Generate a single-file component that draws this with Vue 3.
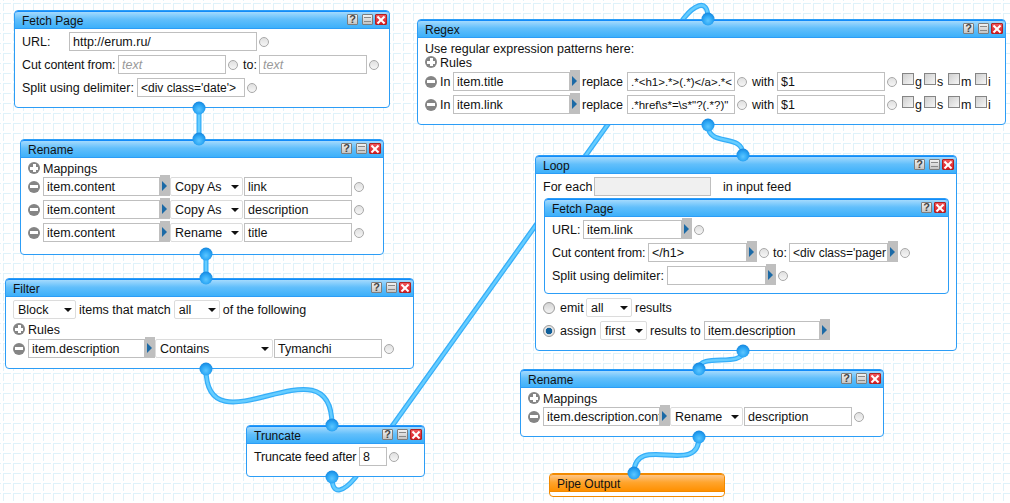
<script setup>
const wires = [
  'M199 108 L199 139',
  'M206 254 L206 278',
  'M206 369 C206 455 332 335 332 425',
  'M332 477 C332 498 345 490 355 478 L684 18 C692 8 708 -5 708 19',
  'M708 125 C708 148 743 132 743 155',
  'M743 351 C743 368 699 352 699 369',
  'M699 437 C699 478 634 432 634 473'
]
const balls = [
  [199, 108], [199, 139], [206, 254], [206, 278], [206, 369], [332, 425], [332, 477],
  [708, 19], [708, 125], [743, 155], [743, 351], [699, 369], [699, 437], [634, 473]
]
</script>

<template>
  <div class="canvas">
    <svg class="layer" width="1010" height="503">
      <defs>
        <pattern id="grid" x="3" y="3" width="10" height="10" patternUnits="userSpaceOnUse">
          <path class="grid-line" d="M0 .5H8M.5 0V8" />
        </pattern>
      </defs>
      <rect width="1010" height="503" fill="url(#grid)" />
      <g v-for="d in wires" :key="d">
        <path class="wire-out" :d="d" />
        <path class="wire-in" :d="d" />
      </g>
    </svg>

    <section class="mod m-fetch">
      <header class="title">Fetch Page<span class="btns"><i class="btn help">?</i><i class="btn min"></i><i class="btn close"></i></span></header>
      <div class="body">
        <div class="row"><span class="w47">URL:</span><span class="inp w188">http://erum.ru/</span><i class="term"></i></div>
        <div class="row"><span class="w96 tight">Cut content from:</span><span class="inp w108 ph">text</span><i class="term"></i><span class="to">to:</span><span class="inp w108 ph">text</span><i class="term"></i></div>
        <div class="row"><span class="w115">Split using delimiter:</span><span class="inp w108 sm">&lt;div class='date'&gt;</span><i class="term"></i></div>
      </div>
    </section>

    <section class="mod m-rename">
      <header class="title">Rename<span class="btns"><i class="btn help">?</i><i class="btn min"></i><i class="btn close"></i></span></header>
      <div class="body">
        <div class="row rule-head"><i class="ico plus"></i>Mappings</div>
        <div class="row"><i class="ico minus"></i><span class="inp w117">item.content</span><i class="arrow"></i><span class="sel w73">Copy As</span><span class="inp w108 ml1">link</span><i class="term"></i></div>
        <div class="row"><i class="ico minus"></i><span class="inp w117">item.content</span><i class="arrow"></i><span class="sel w73">Copy As</span><span class="inp w108 ml1">description</span><i class="term"></i></div>
        <div class="row"><i class="ico minus"></i><span class="inp w117">item.content</span><i class="arrow"></i><span class="sel w73">Rename</span><span class="inp w108 ml1">title</span><i class="term"></i></div>
      </div>
    </section>

    <section class="mod m-filter">
      <header class="title">Filter<span class="btns"><i class="btn help">?</i><i class="btn min"></i><i class="btn close"></i></span></header>
      <div class="body">
        <div class="row"><span class="sel w63">Block</span><span class="mx3">items that match</span><span class="sel w46">all</span><span class="mx3">of the following</span></div>
        <div class="row rule-head rules-filter"><i class="ico plus"></i>Rules</div>
        <div class="row"><i class="ico minus"></i><span class="inp w117">item.description</span><i class="arrow"></i><span class="sel w118">Contains</span><span class="inp w108 ml1">Tymanchi</span><i class="term"></i></div>
      </div>
    </section>

    <section class="mod m-trunc">
      <header class="title">Truncate<span class="btns"><i class="btn help">?</i><i class="btn min"></i><i class="btn close"></i></span></header>
      <div class="body">
        <div class="row"><span class="w105 tight">Truncate feed after</span><span class="inp w28">8</span><i class="term"></i></div>
      </div>
    </section>

    <section class="mod m-regex">
      <header class="title">Regex<span class="btns"><i class="btn help">?</i><i class="btn min"></i><i class="btn close"></i></span></header>
      <div class="body">
        <div class="row head-line">Use regular expression patterns here:</div>
        <div class="row rule-head rules-regex"><i class="ico plus"></i>Rules</div>
        <div class="row">
          <i class="ico minus"></i><span class="w13">In</span><span class="inp w117">item.title</span><i class="arrow"></i><span class="rep">replace</span><span class="inp w108 xs">.*&lt;h1&gt;.*&gt;(.*)&lt;/a&gt;.*&lt;</span><i class="term"></i><span class="with">with</span><span class="inp w108">$1</span><i class="term"></i>
          <span class="checks"><i class="chk"></i><b class="flag f-g">g</b><i class="chk"></i><b class="flag f-s">s</b><i class="chk"></i><b class="flag f-m">m</b><i class="chk"></i><b class="flag">i</b></span>
        </div>
        <div class="row">
          <i class="ico minus"></i><span class="w13">In</span><span class="inp w117">item.link</span><i class="arrow"></i><span class="rep">replace</span><span class="inp w108 xs">.*href\s*=\s*"?(.*?)"</span><i class="term"></i><span class="with">with</span><span class="inp w108">$1</span><i class="term"></i>
          <span class="checks"><i class="chk"></i><b class="flag f-g">g</b><i class="chk"></i><b class="flag f-s">s</b><i class="chk"></i><b class="flag f-m">m</b><i class="chk"></i><b class="flag">i</b></span>
        </div>
      </div>
    </section>

    <section class="mod m-loop">
      <header class="title">Loop<span class="btns"><i class="btn help">?</i><i class="btn min"></i><i class="btn close"></i></span></header>
      <div class="body">
        <div class="row"><span class="w51">For each</span><span class="inp w117 off"></span><span class="in-feed">in input feed</span></div>
        <section class="mod inner">
          <header class="title">Fetch Page<span class="btns"><i class="btn help">?</i><i class="btn close"></i></span></header>
          <div class="body">
            <div class="row"><span class="w31">URL:</span><span class="inp w99">item.link</span><i class="arrow"></i><i class="term"></i></div>
            <div class="row"><span class="w96 tight">Cut content from:</span><span class="inp w99">&lt;/h1&gt;</span><i class="arrow"></i><i class="term"></i><span class="to">to:</span><span class="inp w99 sm">&lt;div class='pager</span><i class="arrow"></i><i class="term"></i></div>
            <div class="row"><span class="w115">Split using delimiter:</span><span class="inp w99"></span><i class="arrow"></i><i class="term"></i></div>
          </div>
        </section>
        <div class="row emit"><i class="radio"></i><span class="w26">emit</span><span class="sel w46">all</span><span class="mx3">results</span></div>
        <div class="row"><i class="radio on"></i><span class="w40">assign</span><span class="sel w47">first</span><span class="mx3 w51">results to</span><span class="inp w116">item.description</span><i class="arrow"></i></div>
      </div>
    </section>

    <section class="mod m-rename2">
      <header class="title">Rename<span class="btns"><i class="btn help">?</i><i class="btn min"></i><i class="btn close"></i></span></header>
      <div class="body">
        <div class="row rule-head"><i class="ico plus"></i>Mappings</div>
        <div class="row"><i class="ico minus"></i><span class="inp w117">item.description.cont</span><i class="arrow"></i><span class="sel w73">Rename</span><span class="inp w108 ml1">description</span><i class="term"></i></div>
      </div>
    </section>

    <section class="mod m-pipe">
      <header class="title">Pipe Output</header>
    </section>

    <svg class="layer" width="1010" height="503">
      <defs>
        <radialGradient id="ball" cx="50%" cy="62%" r="60%">
          <stop offset="0" stop-color="#5cc6ff" />
          <stop offset=".55" stop-color="#2fa9f6" />
          <stop offset="1" stop-color="#1588e0" />
        </radialGradient>
      </defs>
      <circle v-for="b in balls" :key="b.join()" :cx="b[0]" :cy="b[1]" r="6.5" fill="url(#ball)" />
    </svg>
  </div>
</template>

<style scoped>
.canvas { position: relative; width: 1010px; height: 503px; overflow: hidden; background: #fff; font: 12.5px "Liberation Sans", Arial, sans-serif; color: #111; }
.layer { position: absolute; left: 0; top: 0; pointer-events: none; }
.grid-line { fill: none; stroke: #dff2fa; stroke-width: 1; }
.wire-out { fill: none; stroke: #35aef9; stroke-width: 5; }
.wire-in { fill: none; stroke: #66cdff; stroke-width: 2.5; }

.mod { position: absolute; box-sizing: border-box; background: #fff; border: 1px solid #2c9df6; border-radius: 4px; }
.m-fetch { left: 14px; top: 10px; width: 376px; height: 98px; }
.m-rename { left: 20px; top: 139px; width: 364px; height: 116px; }
.m-filter { left: 5px; top: 278px; width: 409px; height: 91px; }
.m-trunc { left: 246px; top: 425px; width: 179px; height: 52px; }
.m-regex { left: 417px; top: 19px; width: 589px; height: 106px; }
.m-loop { left: 535px; top: 155px; width: 422px; height: 196px; }
.m-rename2 { left: 520px; top: 369px; width: 364px; height: 68px; }
.m-pipe { left: 549px; top: 473px; width: 176px; height: 24px; border-color: #f28a00; }
.inner { position: relative; width: 405px; height: 96px; margin: -2px 0 4px 1px; }

.title { position: relative; box-sizing: border-box; height: 18px; padding-left: 7px; font-size: 12px; line-height: 19px; border-top: 1px solid #128bfa; border-bottom: 1px solid #2c9df6; border-radius: 3px 3px 0 0; background: linear-gradient(#a4dafd, #62bffb 45%, #3db0fa); white-space: nowrap; }
.m-pipe .title { border-top-color: #f28a00; border-bottom-color: #f28a00; background: linear-gradient(#fdc58a, #ffa52e 45%, #ff9000); }
.btns { position: absolute; right: 2px; top: 2px; display: flex; gap: 2px; }
.btn { position: relative; display: block; box-sizing: border-box; width: 11px; height: 11px; border: 1px solid #7d7d7d; border-radius: 1px; background: linear-gradient(#f2f2f2, #c4c4c4); font: bold 11px/9px "Liberation Sans", sans-serif; text-align: center; color: #444; }
.help { margin-right: 2px; }
.inner .help { margin-right: 0; }
.min::before { content: ""; position: absolute; left: 1px; right: 1px; top: 2px; height: 3px; border-top: 1px solid #888; border-bottom: 1px solid #888; }
.close { width: 12px; border-color: #b02020; background: linear-gradient(#f0565a, #d81c24); }
.close::before, .close::after { content: ""; position: absolute; left: 0; top: 3.5px; width: 10px; height: 2px; background: #fff; transform: rotate(45deg); }
.close::after { transform: rotate(-45deg); }

.body { padding: 3px 0 0 7px; }
.row { display: flex; align-items: center; height: 19px; margin-bottom: 4px; white-space: nowrap; }
.row > span { flex: none; }
.tight { letter-spacing: -.15px; }
.rule-head { height: 14px; margin-bottom: 1px; margin-top: 1px; }
.rules-filter { margin-top: 3px; margin-bottom: 2px; }
.rules-regex { margin-top: 0; margin-bottom: 2px; }
.head-line { height: 15px; margin: 0; }

.inp { box-sizing: border-box; display: block; height: 19px; line-height: 18px; padding: 0 0 0 3px; border: 1px solid #bfbfbf; background: #fff; overflow: hidden; }
.ph { color: #999; font-style: italic; }
.sm { font-size: 12px; }
.xs { font-size: 11.5px; }
.off { background: #f0f0f0; }
.sel { box-sizing: border-box; position: relative; display: block; height: 19px; line-height: 18px; padding-left: 4px; border: 1px solid #dcdcdc; border-radius: 2px; background: #fff; }
.sel::after { content: ""; position: absolute; right: 3px; top: 7px; border: 4px solid transparent; border-top: 4px solid #111; border-bottom: 0; }

.arrow { position: relative; flex: none; align-self: flex-start; width: 10px; height: 21px; margin-top: -2px; background: #bfbfbf; }
.arrow::before { content: ""; position: absolute; left: 2px; top: 6px; border: 5px solid transparent; border-left: 5px solid #1c6aa6; border-right: 0; }
.term { flex: none; box-sizing: border-box; width: 10px; height: 10px; margin-left: 2px; border: 1px solid #a8a8a8; border-radius: 50%; background: linear-gradient(#e0e0e0, #f6f6f6); }
.ico { position: relative; flex: none; width: 12px; height: 12px; margin: 0 3px 0 0; border-radius: 50%; background: #858585; }
.ico::before { content: ""; position: absolute; left: 2px; top: 4.5px; width: 8px; height: 3px; background: #fff; }
.plus::after { content: ""; position: absolute; left: 4.5px; top: 2px; width: 3px; height: 8px; background: #fff; }
.rule-head .ico { top: -1px; }
.radio { position: relative; flex: none; box-sizing: border-box; width: 12px; height: 12px; margin-right: 5px; border: 1px solid #9a9a9a; border-radius: 50%; background: linear-gradient(#d4d4d4, #f4f4f4); }
.radio.on { background: radial-gradient(circle, #0f5f9a 0 3px, #e4e4e4 3.6px); }
.chk { flex: none; box-sizing: border-box; width: 12px; height: 12px; border: 1px solid #858585; background: linear-gradient(135deg, #cfcfcf, #f6f6f6); align-self: flex-start; margin-top: 1px; }
.checks { display: flex; margin-left: 5px; }
.flag { font-weight: normal; margin-left: 1px; margin-right: 2px; width: 7px; line-height: 20px; }
.f-s { margin-right: 4px; }
.f-m { width: 12px; margin-right: 2px; }

.to { margin: 0 1px 0 5px; width: 15px; }
.inner .to { margin-left: 4px; }
.with { margin-left: 5px; width: 25px; }
.rep { margin: 0 3px 0 2px; width: 42px; }
.in-feed { margin-left: 12px; }
.ml1 { margin-left: 1px; }
.mx3 { margin: 0 3px; }
.w13 { width: 13px; } .w26 { width: 26px; } .w28 { width: 28px; } .w31 { width: 31px; } .w40 { width: 40px; }
.w46 { width: 46px; } .w47 { width: 47px; } .w51 { width: 51px; }
.w63 { width: 63px; } .w73 { width: 73px; } .w96 { width: 96px; } .w99 { width: 99px; } .w105 { width: 105px; }
.w108 { width: 108px; } .w115 { width: 115px; } .w116 { width: 116px; } .w117 { width: 117px; } .w118 { width: 118px; } .w188 { width: 188px; }
</style>

<style>
html, body { margin: 0; overflow: hidden; }
</style>
